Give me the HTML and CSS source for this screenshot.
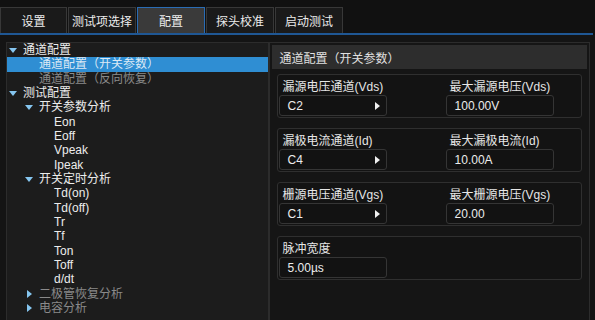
FILE: index.html
```html
<!DOCTYPE html>
<html lang="zh">
<head>
<meta charset="utf-8">
<link rel="stylesheet" href="styles.css">
</head>
<body>
<div class="app">
  <div class="tabs">
    <div class="tab">设置</div>
    <div class="tab">测试项选择</div>
    <div class="tab active">配置</div>
    <div class="tab">探头校准</div>
    <div class="tab">启动测试</div>
  </div>
  <div class="content">
    <div class="tree">
      <div class="row l0"><span class="tri down"></span>通道配置</div>
      <div class="row l1 sel">通道配置（开关参数）</div>
      <div class="row l1 dim">通道配置（反向恢复）</div>
      <div class="row l0"><span class="tri down"></span>测试配置</div>
      <div class="row l1a"><span class="tri down"></span>开关参数分析</div>
      <div class="row l3">Eon</div>
      <div class="row l3">Eoff</div>
      <div class="row l3">Vpeak</div>
      <div class="row l3">Ipeak</div>
      <div class="row l1a"><span class="tri down"></span>开关定时分析</div>
      <div class="row l3">Td(on)</div>
      <div class="row l3">Td(off)</div>
      <div class="row l3">Tr</div>
      <div class="row l3">Tf</div>
      <div class="row l3">Ton</div>
      <div class="row l3">Toff</div>
      <div class="row l3">d/dt</div>
      <div class="row l1c dim"><span class="tri right"></span>二极管恢复分析</div>
      <div class="row l1c dim"><span class="tri right"></span>电容分析</div>
    </div>
    <div class="panel">
      <div class="panel-head">通道配置（开关参数）</div>
      <div class="group">
        <div class="field">
          <div class="label">漏源电压通道(Vds)</div>
          <div class="input"><span>C2</span><span class="caret"></span></div>
        </div>
        <div class="field">
          <div class="label">最大漏源电压(Vds)</div>
          <div class="input"><span>100.00V</span></div>
        </div>
      </div>
      <div class="group">
        <div class="field">
          <div class="label">漏极电流通道(Id)</div>
          <div class="input"><span>C4</span><span class="caret"></span></div>
        </div>
        <div class="field">
          <div class="label">最大漏极电流(Id)</div>
          <div class="input"><span>10.00A</span></div>
        </div>
      </div>
      <div class="group">
        <div class="field">
          <div class="label">栅源电压通道(Vgs)</div>
          <div class="input"><span>C1</span><span class="caret"></span></div>
        </div>
        <div class="field">
          <div class="label">最大栅源电压(Vgs)</div>
          <div class="input"><span>20.00</span></div>
        </div>
      </div>
      <div class="group">
        <div class="field">
          <div class="label">脉冲宽度</div>
          <div class="input"><span>5.00µs</span></div>
        </div>
      </div>
    </div>
  </div>
</div>
</body>
</html>
```
FILE: styles.css
```css
* { box-sizing: border-box; }
html, body {
  margin: 0;
  padding: 0;
  background: #111111;
  width: 595px;
  height: 320px;
  overflow: hidden;
  font-family: "Liberation Sans", "Noto Sans CJK SC", sans-serif;
  font-size: 12px;
  color: #e6e6e6;
}
.app {
  display: flex;
  flex-direction: column;
  padding-top: 7px;
}
.tabs {
  display: flex;
  padding-left: 0;
  height: 28px;
  border-bottom: 2px solid #1f5794;
  margin-right: 2px;
}
.tab {
  width: 68px;
  height: 26px;
  margin-right: 1px;
  background: #1a1a1a;
  border: 1px solid #383838;
  border-bottom: none;
  display: flex;
  align-items: center;
  justify-content: center;
  color: #ececec;
  font-size: 12px;
}
.tab:first-child { width: 67px; }
.tab.active {
  background: #3a3a3a;
  border: 1px solid #2a6cb4;
  border-bottom: none;
}
.content {
  display: flex;
  padding: 7px 5px 0 6px;
  height: 286px;
  background: #141414;
}
.tree {
  width: 263px;
  background: #1c1c1c;
  border: 1px solid #2c2c2c;
  border-bottom: none;
}
.row {
  height: 14.33px;
  line-height: 14.33px;
  display: flex;
  align-items: center;
  white-space: nowrap;
  color: #ececec;
}
.row.dim { color: #8a8a8a; }
.row.sel {
  background: #2f8ed3;
  color: #dce9f5;
}
.l0 { padding-left: 2px; }
.l1 { padding-left: 32px; }
.l1a { padding-left: 18px; }
.l1c { padding-left: 20px; }
.l3 { padding-left: 47px; }
.tri { display: inline-block; flex: none; }
.tri.down {
  width: 0; height: 0;
  border-left: 4px solid transparent;
  border-right: 4px solid transparent;
  border-top: 5px solid #86c6f0;
  margin-right: 6px;
  margin-top: 1px;
}
.tri.right {
  width: 0; height: 0;
  border-top: 4px solid transparent;
  border-bottom: 4px solid transparent;
  border-left: 5px solid #86c6f0;
  margin-right: 7px;
}
.panel {
  width: 322px;
  background: #151515;
  border: 1px solid #2c2c2c;
  border-bottom: none;
  padding: 2px 2px 0 2px;
  display: flex;
  flex-direction: column;
}
.panel-head {
  height: 24px;
  background: #2d2d2d;
  display: flex;
  align-items: center;
  padding-left: 8px;
  color: #e0e0e0;
  margin-bottom: 5px;
}
.group {
  margin: 0 5px 10px 5px;
  border: 1px solid #2f2f2f;
  border-radius: 3px;
  background: #131313;
  padding: 5px 1px 1px 1px;
  display: grid;
  grid-template-columns: 167px 108px;
}
.label {
  height: 15px;
  line-height: 15px;
  padding-left: 4px;
  color: #e6e6e6;
  white-space: nowrap;
}
.input {
  width: 108px;
  height: 21px;
  border: 1px solid #353535;
  border-radius: 3px;
  background: #121212;
  display: flex;
  align-items: center;
  justify-content: space-between;
  padding: 0 6px 0 8px;
  color: #ececec;
}
.caret {
  width: 0; height: 0;
  border-top: 4px solid transparent;
  border-bottom: 4px solid transparent;
  border-left: 5px solid #f0f0f0;
}
```
